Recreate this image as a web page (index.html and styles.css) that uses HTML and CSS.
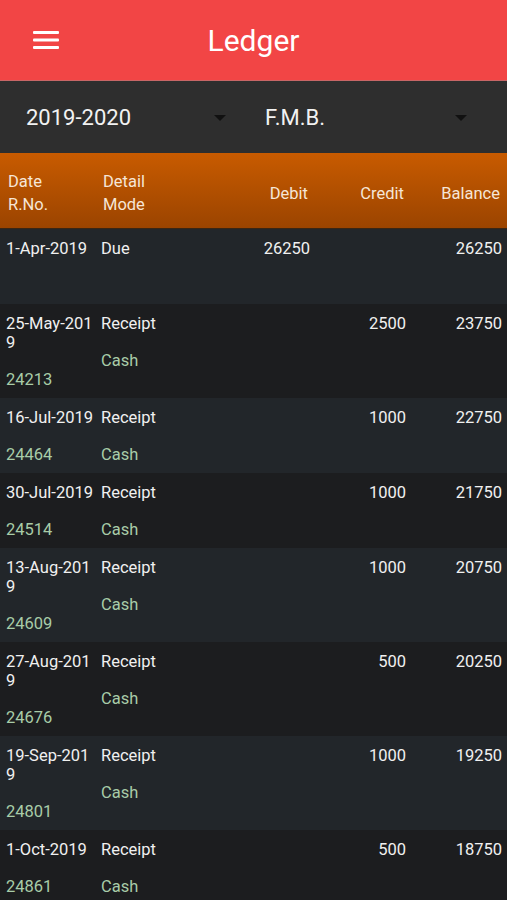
FILE: index.html
```html
<!DOCTYPE html>
<html>
<head>
    <title>Ledger</title>
    <link rel="stylesheet" href="styles.css">
</head>
<body>
    <!-- Top bar -->
    <div class="toolbar">
        <svg class="menu-icon" width="26" height="18" viewBox="0 0 26 18">
            <rect x="0" y="0" width="26" height="3" rx="1" fill="#fff"/>
            <rect x="0" y="7.5" width="26" height="3" rx="1" fill="#fff"/>
            <rect x="0" y="15" width="26" height="3" rx="1" fill="#fff"/>
        </svg>
        <h1>Ledger</h1>
    </div>

    <!-- Filters -->
    <div class="filters">
        <div class="select">
            <span>2019-2020</span>
            <span class="arrow"></span>
        </div>
        <div class="select">
            <span>F.M.B.</span>
            <span class="arrow"></span>
        </div>
    </div>

    <!-- Table header -->
    <div class="row head">
        <div class="cell date"><div>Date</div><div>R.No.</div></div>
        <div class="cell"><div>Detail</div><div>Mode</div></div>
        <div class="cell num">Debit</div>
        <div class="cell num">Credit</div>
        <div class="cell num">Balance</div>
    </div>

    <div id="rows"></div>

    <script>
        const entries = [
            ['1-Apr-2019', '', 'Due', '', '26250', '', '26250'],
            ['25-May-2019', '24213', 'Receipt', 'Cash', '', '2500', '23750'],
            ['16-Jul-2019', '24464', 'Receipt', 'Cash', '', '1000', '22750'],
            ['30-Jul-2019', '24514', 'Receipt', 'Cash', '', '1000', '21750'],
            ['13-Aug-2019', '24609', 'Receipt', 'Cash', '', '1000', '20750'],
            ['27-Aug-2019', '24676', 'Receipt', 'Cash', '', '500', '20250'],
            ['19-Sep-2019', '24801', 'Receipt', 'Cash', '', '1000', '19250'],
            ['1-Oct-2019', '24861', 'Receipt', 'Cash', '', '500', '18750']
        ];

        let html = '';
        entries.forEach(function (e) {
            html += '<div class="row">' +
                '<div class="cell date"><div class="main">' + e[0] + '</div><div class="sub">' + e[1] + '</div></div>' +
                '<div class="cell"><div class="main">' + e[2] + '</div><div class="sub">' + e[3] + '</div></div>' +
                '<div class="cell num">' + e[4] + '</div>' +
                '<div class="cell num">' + e[5] + '</div>' +
                '<div class="cell num">' + e[6] + '</div>' +
                '</div>';
        });
        document.getElementById('rows').innerHTML = html;
    </script>
</body>
</html>
```

FILE: styles.css
```css
body {
    margin: 0;
    font-family: Roboto, "Liberation Sans", sans-serif;
    background-color: #1d1e20;
    color: #f0f0f0;
    overflow: hidden;
}
.toolbar {
    height: 80px;
    background-color: #f24545;
    border-bottom: 1px solid #c86666;
    display: flex;
    align-items: center;
    position: relative;
}
.menu-icon {
    margin-left: 33px;
    margin-top: -1px;
}
.toolbar h1 {
    position: absolute;
    left: 0;
    right: 0;
    margin: 0;
    text-align: center;
    font-size: 30px;
    font-weight: 400;
    color: #fff;
    top: 23px;
    pointer-events: none;
}
.filters {
    height: 72px;
    background-color: #2e2e2e;
    display: flex;
}
.select {
    width: 240px;
    box-sizing: border-box;
    padding: 0 14px 0 26px;
    display: flex;
    align-items: center;
    justify-content: space-between;
    font-size: 22px;
    color: #f2f2f2;
}
.select + .select {
    padding-left: 25px;
    padding-right: 13px;
}
.arrow {
    width: 0;
    height: 0;
    border-left: 6px solid transparent;
    border-right: 6px solid transparent;
    border-top: 6px solid #111;
    margin-top: 2px;
}
.row {
    display: grid;
    grid-template-columns: 95px 1fr 96px 96px 96px;
    padding: 10px 5px 9px 6px;
    font-size: 16.5px;
    line-height: 19px;
}
.head {
    height: 76px;
    box-sizing: border-box;
    padding: 5px 7px 0 8px;
    background: linear-gradient(#c85b00, #9b4400);
    border-bottom: 1px solid #3a2614;
    color: #f6e6d6;
    line-height: 23px;
    align-items: center;
}
.head .date {
    padding-right: 0;
}
#rows .row:nth-child(odd) {
    background-color: #22262a;
}
#rows .row:nth-child(even) {
    background-color: #1c1d1f;
}
.cell.date {
    padding-right: 5px;
    word-break: break-all;
}
.num {
    text-align: right;
}
.sub {
    margin-top: 18px;
    min-height: 19px;
    color: #a8cca8;
}
```
